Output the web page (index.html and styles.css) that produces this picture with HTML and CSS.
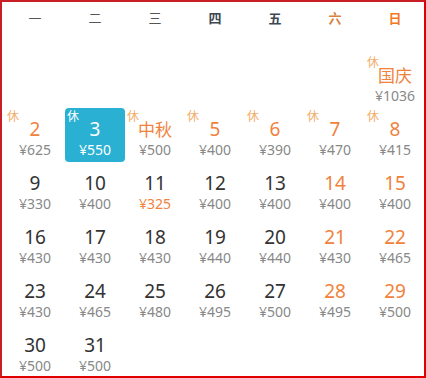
FILE: index.html
```html
<!DOCTYPE html>
<html lang="zh">
<head>
<meta charset="utf-8">
<link rel="stylesheet" href="styles.css">
</head>
<body>
<div class="cal">
  <div class="week">
    <div class="wd">一</div>
    <div class="wd">二</div>
    <div class="wd">三</div>
    <div class="wd strong">四</div>
    <div class="wd strong">五</div>
    <div class="wd strong sat">六</div>
    <div class="wd strong sun">日</div>
  </div>
  <div class="grid">
    <div class="cell"></div>
    <div class="cell"></div>
    <div class="cell"></div>
    <div class="cell"></div>
    <div class="cell"></div>
    <div class="cell"></div>
    <div class="cell"><span class="rest">休</span><div class="num hol">国庆</div><div class="price">¥1036</div></div>

    <div class="cell"><span class="rest">休</span><div class="num or">2</div><div class="price">¥625</div></div>
    <div class="cell sel"><span class="rest">休</span><div class="num">3</div><div class="price">¥550</div></div>
    <div class="cell"><span class="rest">休</span><div class="num hol">中秋</div><div class="price">¥500</div></div>
    <div class="cell"><span class="rest">休</span><div class="num or">5</div><div class="price">¥400</div></div>
    <div class="cell"><span class="rest">休</span><div class="num or">6</div><div class="price">¥390</div></div>
    <div class="cell"><span class="rest">休</span><div class="num or">7</div><div class="price">¥470</div></div>
    <div class="cell"><span class="rest">休</span><div class="num or">8</div><div class="price">¥415</div></div>

    <div class="cell"><div class="num">9</div><div class="price">¥330</div></div>
    <div class="cell"><div class="num">10</div><div class="price">¥400</div></div>
    <div class="cell"><div class="num">11</div><div class="price low">¥325</div></div>
    <div class="cell"><div class="num">12</div><div class="price">¥400</div></div>
    <div class="cell"><div class="num">13</div><div class="price">¥400</div></div>
    <div class="cell"><div class="num or">14</div><div class="price">¥400</div></div>
    <div class="cell"><div class="num or">15</div><div class="price">¥400</div></div>

    <div class="cell"><div class="num">16</div><div class="price">¥430</div></div>
    <div class="cell"><div class="num">17</div><div class="price">¥430</div></div>
    <div class="cell"><div class="num">18</div><div class="price">¥430</div></div>
    <div class="cell"><div class="num">19</div><div class="price">¥440</div></div>
    <div class="cell"><div class="num">20</div><div class="price">¥440</div></div>
    <div class="cell"><div class="num or">21</div><div class="price">¥430</div></div>
    <div class="cell"><div class="num or">22</div><div class="price">¥465</div></div>

    <div class="cell"><div class="num">23</div><div class="price">¥430</div></div>
    <div class="cell"><div class="num">24</div><div class="price">¥465</div></div>
    <div class="cell"><div class="num">25</div><div class="price">¥480</div></div>
    <div class="cell"><div class="num">26</div><div class="price">¥495</div></div>
    <div class="cell"><div class="num">27</div><div class="price">¥500</div></div>
    <div class="cell"><div class="num or">28</div><div class="price">¥495</div></div>
    <div class="cell"><div class="num or">29</div><div class="price">¥500</div></div>

    <div class="cell"><div class="num">30</div><div class="price">¥500</div></div>
    <div class="cell"><div class="num">31</div><div class="price">¥500</div></div>
  </div>
</div>
</body>
</html>
```
FILE: styles.css
```css
html, body {
  margin: 0;
  padding: 0;
  background: #fff;
}
.cal {
  box-sizing: border-box;
  width: 426px;
  height: 378px;
  border: 2px solid #e00000;
  border-top-color: #c81e24;
  border-left-color: #c81e24;
  padding-left: 3px;
  font-family: "Noto Sans", "Noto Sans CJK SC", sans-serif;
  overflow: hidden;
}
.week {
  display: grid;
  grid-template-columns: repeat(7, 60px);
  height: 32px;
  margin-bottom: 20px;
}
.wd {
  text-align: center;
  line-height: 32px;
  font-size: 13px;
  color: #555;
  font-family: "Noto Sans CJK SC", sans-serif;
}
.wd.strong {
  font-weight: bold;
  color: #3e4852;
}
.wd.sat {
  color: #d9803e;
}
.wd.sun {
  color: #f27a1e;
}
.grid {
  display: grid;
  grid-template-columns: repeat(7, 60px);
  grid-auto-rows: 54px;
}
.cell {
  position: relative;
  text-align: center;
  padding-top: 9px;
  box-sizing: border-box;
}
.rest {
  position: absolute;
  left: 2px;
  top: 1px;
  font-size: 12px;
  line-height: 14px;
  color: #f4ad68;
  font-family: "Noto Sans CJK SC", sans-serif;
}
.num {
  font-size: 19px;
  line-height: 24px;
  color: #333;
}
.num.or {
  color: #f0823c;
}
.num.hol {
  color: #f0823c;
  font-size: 17px;
  font-family: "Noto Sans CJK SC", sans-serif;
}
.price {
  font-size: 14px;
  line-height: 18px;
  color: #888;
}
.price.low {
  color: #f0823c;
}
.cell.sel {
  background: #29b0d3;
  border-radius: 4px;
}
.cell.sel .rest,
.cell.sel .num,
.cell.sel .price {
  color: #fff;
}
```
